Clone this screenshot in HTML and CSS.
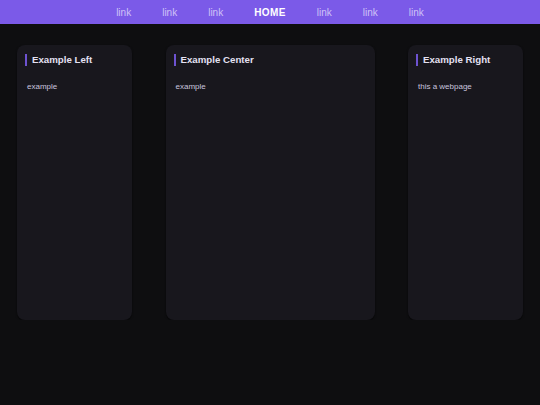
FILE: index.html
```html
<!DOCTYPE html>
<html>
<head>
<meta charset="utf-8">
<link rel="stylesheet" href="styles.css">
</head>
<body>
<nav class="nav">
  <a class="nav-link">link</a>
  <a class="nav-link">link</a>
  <a class="nav-link">link</a>
  <a class="nav-link home">HOME</a>
  <a class="nav-link">link</a>
  <a class="nav-link">link</a>
  <a class="nav-link">link</a>
</nav>
<main class="grid">
  <section class="card left">
    <h2 class="card-title">Example Left</h2>
    <p class="card-text">example</p>
  </section>
  <section class="card center">
    <h2 class="card-title">Example Center</h2>
    <p class="card-text">example</p>
  </section>
  <section class="card right">
    <h2 class="card-title">Example Right</h2>
    <p class="card-text">this a webpage</p>
  </section>
</main>
</body>
</html>
```

FILE: styles.css
```css
html, body {
  margin: 0;
  padding: 0;
  background: #0e0e10;
  font-family: "Liberation Sans", Arial, sans-serif;
}
.nav {
  height: 24px;
  background: #7b5ae8;
  display: flex;
  justify-content: center;
  align-items: center;
  gap: 31px;
}
.nav-link {
  font-size: 10px;
  color: #cfc2f7;
  text-decoration: none;
}
.nav-link.home {
  color: #ffffff;
  font-weight: bold;
  letter-spacing: 0.4px;
}
.grid {
  display: grid;
  grid-template-columns: 115px 209px 115px;
  justify-content: space-between;
  padding: 21px 17px 0 17px;
}
.card {
  height: 275px;
  background: #18171d;
  border-radius: 8px;
  box-shadow: 0 1px 2px rgba(0,0,0,0.6);
  padding: 8px 8px;
  box-sizing: border-box;
}
.card-title {
  margin: 1px 0 0 0;
  font-size: 9.7px;
  font-weight: bold;
  color: #e4e1f2;
  border-left: 2px solid #6d52d0;
  padding-left: 5px;
  line-height: 12px;
}
.card-text {
  margin: 16px 0 0 2px;
  font-size: 8px;
  color: #c8c4df;
}
```
